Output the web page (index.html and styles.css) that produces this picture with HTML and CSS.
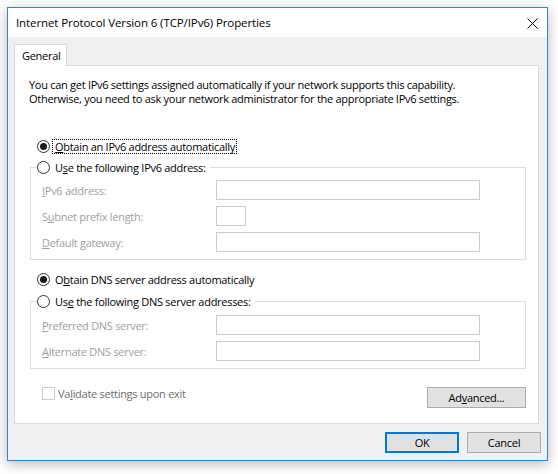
FILE: index.html
```html
<!DOCTYPE html>
<html>
<head>
<meta charset="utf-8">
<title>Internet Protocol Version 6 (TCP/IPv6) Properties</title>
<link rel="stylesheet" href="styles.css">
</head>
<body>
<div class="window">
  <div class="titlebar">
    <span class="title">Internet Protocol Version 6 (TCP/IPv6) Properties</span>
    <span class="close"><svg width="11" height="11" viewBox="0 0 11 11"><path d="M0.5 0.5 L10.5 10.5 M10.5 0.5 L0.5 10.5" stroke="#000" stroke-width="1" fill="none"/></svg></span>
  </div>
  <div class="client">
    <div class="tabs"><div class="tab">General</div></div>
    <div class="panel">
      <p class="intro">You can get IPv6 settings assigned automatically if your network supports this capability.<br>Otherwise, you need to ask your network administrator for the appropriate IPv6 settings.</p>

      <div class="radio-row r1"><span class="radio on"></span><span class="rlabel focus"><u>O</u>btain an IPv6 address automatically</span></div>
      <div class="group g1">
        <div class="legend"><span class="radio"></span><span class="rlabel">U<u>s</u>e the following IPv6 address:</span></div>
        <div class="fields f1">
          <div class="field"><span class="flabel"><u>I</u>Pv6 address:</span><span class="input wide"></span></div>
          <div class="field"><span class="flabel">S<u>u</u>bnet prefix length:</span><span class="input small"></span></div>
          <div class="field"><span class="flabel"><u>D</u>efault gateway:</span><span class="input wide"></span></div>
        </div>
      </div>

      <div class="radio-row r2"><span class="radio on"></span><span class="rlabel">O<u>b</u>tain DNS server address automatically</span></div>
      <div class="group g2">
        <div class="legend"><span class="radio"></span><span class="rlabel">Us<u>e</u> the following DNS server addresses:</span></div>
        <div class="fields f2">
          <div class="field"><span class="flabel"><u>P</u>referred DNS server:</span><span class="input wide"></span></div>
          <div class="field"><span class="flabel"><u>A</u>lternate DNS server:</span><span class="input wide"></span></div>
        </div>
      </div>

      <div class="bottom-row">
        <div class="check-row"><span class="check"></span><span class="clabel">Va<u>l</u>idate settings upon exit</span></div>
        <span class="btn adv">Ad<u>v</u>anced...</span>
      </div>
    </div>
    <div class="footer">
      <span class="btn ok">OK</span>
      <span class="btn cancel">Cancel</span>
    </div>
  </div>
</div>
</body>
</html>
```
FILE: styles.css
```css
* { box-sizing: border-box; }
html, body { margin: 0; padding: 0; background: #ffffff; }
body {
  font-family: "Open Sans", "Noto Sans", sans-serif;
  font-size: 11px;
  letter-spacing: -0.28px;
  color: #000;
  width: 558px;
  height: 474px;
  overflow: hidden;
}
u { text-decoration: underline; text-underline-offset: 1px; }

.window {
  margin: 7px 0 0 7px;
  width: 541px;
  height: 454px;
  border: 1px solid #2b88d8;
  background: #f0f0f0;
  box-shadow: 0 3px 12px rgba(0, 0, 0, 0.28);
  display: flex;
  flex-direction: column;
}

.titlebar {
  height: 29px;
  background: #ffffff;
  display: flex;
  align-items: center;
  justify-content: space-between;
  padding: 0 9px 0 8px;
  flex: none;
}
.title { font-size: 11.5px; letter-spacing: -0.1px; line-height: 16px; padding-top: 1px; }
.close { width: 11px; height: 11px; display: block; margin-top: 2px; }
.close svg { display: block; }

.client {
  flex: 1;
  padding: 7px 0 0 6px;
  display: flex;
  flex-direction: column;
}

.tabs { display: flex; height: 22px; margin-bottom: -1px; position: relative; z-index: 1; }
.tab {
  width: 53px;
  height: 22px;
  background: #fff;
  border: 1px solid #d9d9d9;
  border-bottom: none;
  padding: 3px 0 0 7px;
  line-height: 16px;
}

.panel {
  width: 525px;
  height: 359px;
  background: #fff;
  border: 1px solid #d9d9d9;
  padding: 12px 0 0 14px;
  display: flex;
  flex-direction: column;
}

.intro { margin: 0; line-height: 14px; white-space: nowrap; }

.radio-row, .legend {
  display: flex;
  align-items: center;
  height: 16px;
}
.radio-row { margin-left: 8px; }
.r1 { margin-top: 32px; }
.r2 { margin-top: 11px; }

.radio {
  width: 13px;
  height: 13px;
  border: 1px solid #333;
  border-radius: 50%;
  background: #fff;
  display: flex;
  align-items: center;
  justify-content: center;
  flex: none;
}
.radio.on::after {
  content: "";
  width: 7px;
  height: 7px;
  border-radius: 50%;
  background: #1a1a1a;
}
.rlabel { margin-left: 2px; padding: 0 1px 0 2px; line-height: 13px; border: 1px solid transparent; white-space: nowrap; }
.focus { border: 1px dotted #000; }

.group {
  margin-left: 1px;
  width: 496px;
  border: 1px solid #dcdcdc;
  padding: 0 0 7px 11px;
}
.g1 { margin-top: 13px; }
.g2 { margin-top: 14px; }
.legend {
  margin: -9px 0 0 -5px;
  background: #fff;
  width: max-content;
  padding-right: 2px;
}
.fields { display: flex; flex-direction: column; gap: 6px; }
.f1 { margin-top: 5px; }
.f2 { margin-top: 6px; }
.field { display: flex; align-items: center; height: 20px; }
.flabel { width: 174px; color: #a0a0a0; white-space: nowrap; flex: none; }
.input {
  height: 20px;
  border: 1px solid #cccccc;
  background: #fff;
  display: block;
}
.input.wide { width: 264px; }
.input.small { width: 30px; }

.bottom-row {
  margin-top: 18px;
  width: 497px;
  display: flex;
  justify-content: space-between;
  align-items: flex-start;
}
.check-row { display: flex; align-items: center; margin-left: 13px; height: 13px; }
.check {
  width: 13px;
  height: 13px;
  border: 1px solid #cccccc;
  background: #fff;
  flex: none;
}
.clabel { margin-left: 3px; color: #6d6d6d; white-space: nowrap; line-height: 13px; }

.btn {
  display: flex;
  align-items: center;
  justify-content: center;
  height: 21px;
  background: #e1e1e1;
  border: 1px solid #adadad;
  line-height: 13px;
  padding-bottom: 1px;
}
.adv { width: 99px; }

.footer {
  margin-top: 8px;
  width: 527px;
  display: flex;
  justify-content: flex-end;
  gap: 8px;
}
.ok, .cancel { width: 74px; }
.ok { border-color: #0078d7; box-shadow: inset 0 0 0 1px #0078d7; }
```
